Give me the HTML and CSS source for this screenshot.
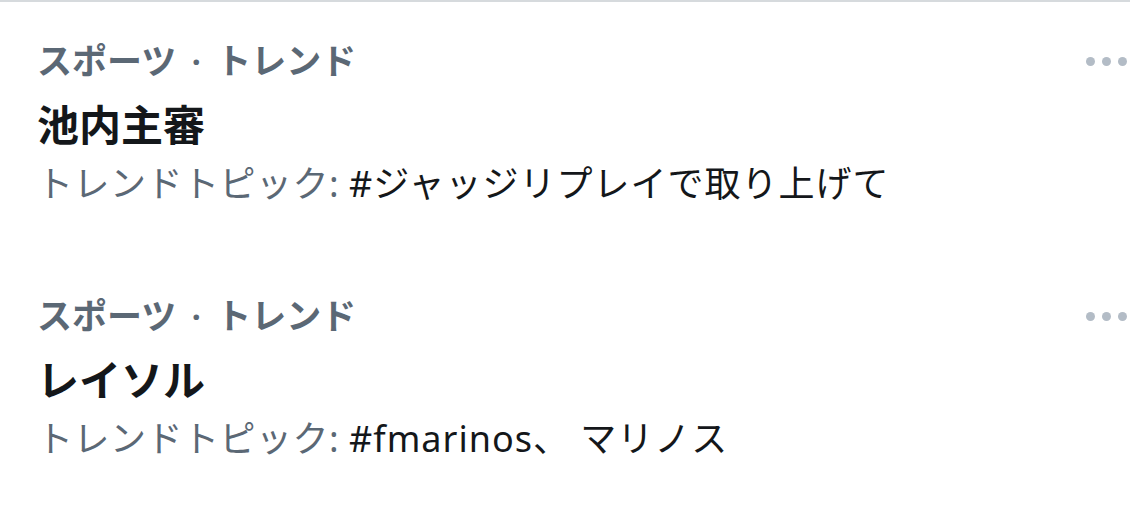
FILE: index.html
```html
<!DOCTYPE html>
<html lang="ja">
<head>
<meta charset="utf-8">
<link rel="stylesheet" href="styles.css">
</head>
<body>
<div class="list">
  <div class="trend">
    <div class="trend-body">
      <div class="cat">スポーツ<span class="sep">·</span>トレンド</div>
      <div class="title">池内主審</div>
      <div class="topic"><span class="label">トレンドトピック: </span><span class="tag">#ジャッジリプレイで取り上げて</span></div>
    </div>
    <div class="more"><span class="dot"></span><span class="dot"></span><span class="dot"></span></div>
  </div>
  <div class="trend">
    <div class="trend-body">
      <div class="cat">スポーツ<span class="sep">·</span>トレンド</div>
      <div class="title">レイソル</div>
      <div class="topic"><span class="label">トレンドトピック: </span><span class="tag">#fmarinos、 マリノス</span></div>
    </div>
    <div class="more"><span class="dot"></span><span class="dot"></span><span class="dot"></span></div>
  </div>
</div>
</body>
</html>
```
FILE: styles.css
```css
html, body {
  margin: 0;
  padding: 0;
  background: #ffffff;
}
body {
  font-family: "Noto Sans", "Noto Sans CJK JP", sans-serif;
  width: 1130px;
  height: 511px;
  overflow: hidden;
}
.list {
  border-top: 2px solid #d6dadd;
}
.trend {
  display: flex;
  justify-content: space-between;
  padding: 29px 3px 48px 37px;
}
.trend-body {
  display: flex;
  flex-direction: column;
}
.cat {
  font-size: 35px;
  line-height: 60px;
  font-weight: 700;
  color: #5b6875;
  white-space: nowrap;
}
.sep {
  display: inline-block;
  width: 40px;
  text-align: center;
  font-size: 32px;
  line-height: 1;
  font-weight: 700;
}
.title {
  font-size: 42px;
  line-height: 68px;
  font-weight: 700;
  color: #14171a;
  white-space: nowrap;
}
.topic {
  font-size: 36px;
  line-height: 50px;
  white-space: nowrap;
}
.label {
  color: #5b6875;
  letter-spacing: 0.5px;
}
.tag {
  color: #14171a;
  letter-spacing: 1px;
}
.more {
  display: flex;
  align-items: center;
  gap: 7px;
  height: 60px;
}
.dot {
  width: 9px;
  height: 9px;
  border-radius: 50%;
  background: #b3bcc6;
}
```
